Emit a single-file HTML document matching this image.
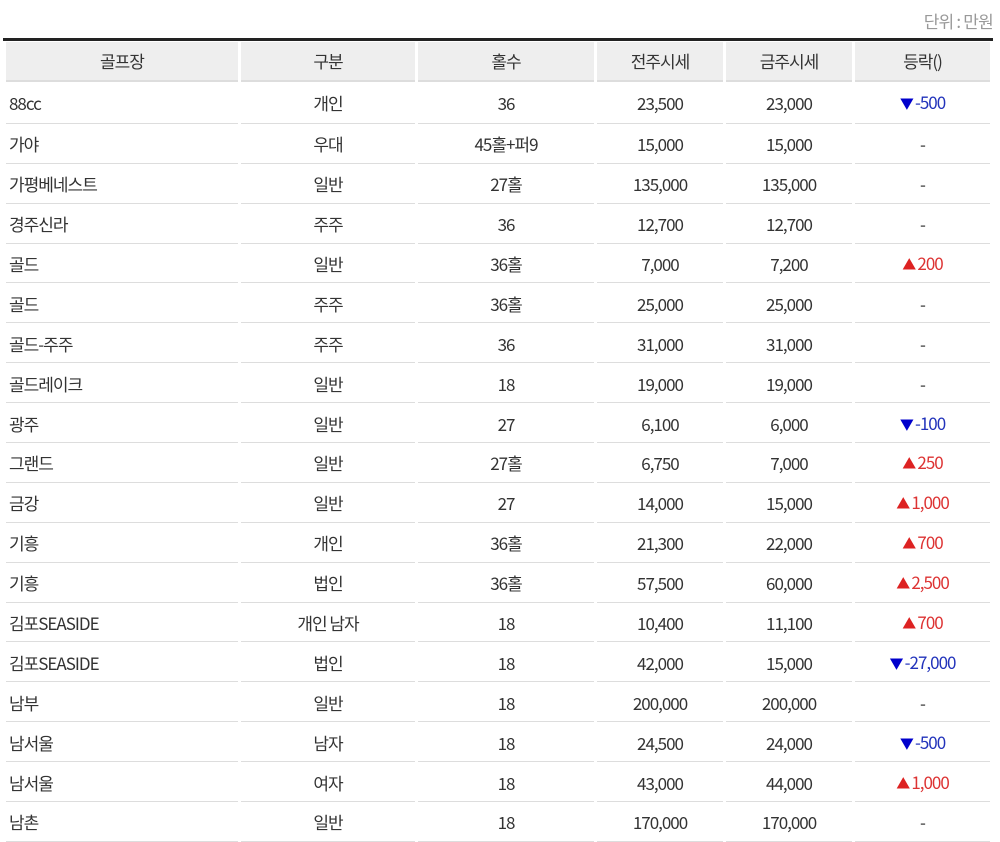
<!DOCTYPE html>
<html><head><meta charset="utf-8"><style>
body{margin:0;background:#fff;font-family:"Noto Sans CJK KR","Liberation Sans",sans-serif;color:#333;width:1000px;height:841px;overflow:hidden;position:relative}
.unit{position:absolute;right:7px;top:10px;font-size:17px;line-height:22px;color:#999;letter-spacing:-0.8px}
.bar{position:absolute;left:3px;top:38px;width:990px;height:3px;background:#222}
table{position:absolute;left:3px;top:42px;border-collapse:separate;border-spacing:3px 0;font-size:17px;letter-spacing:-1px;line-height:20px}
th{background:#eee;font-weight:normal;height:38px;border-bottom:2px solid #ddd;padding:0;vertical-align:middle}
td{height:36.9px;border-bottom:1px solid #ddd;text-align:center;padding:2px 0 0;vertical-align:middle}
td:first-child{text-align:left;padding-left:3px}
.dn{color:#2233bb}.up{color:#dd3333}
.dn::before{content:"▼ ";color:#0000cc;font-size:14px}
.up::before{content:"▲ ";color:#dd2222;font-size:14px}
</style></head><body>
<div class="unit">단위 : 만원</div>
<div class="bar"></div>
<table>
<colgroup><col style="width:232px"><col style="width:174px"><col style="width:176px"><col style="width:126px"><col style="width:126px"><col style="width:135px"></colgroup>
<tr><th>골프장</th><th>구분</th><th>홀수</th><th>전주시세</th><th>금주시세</th><th>등락()</th></tr>
<tr><td style="height:38.9px">88cc</td><td>개인</td><td>36</td><td>23,500</td><td>23,000</td><td><span class="dn">-500</span></td></tr>
<tr><td>가야</td><td>우대</td><td>45홀+퍼9</td><td>15,000</td><td>15,000</td><td>-</td></tr>
<tr><td>가평베네스트</td><td>일반</td><td>27홀</td><td>135,000</td><td>135,000</td><td>-</td></tr>
<tr><td>경주신라</td><td>주주</td><td>36</td><td>12,700</td><td>12,700</td><td>-</td></tr>
<tr><td>골드</td><td>일반</td><td>36홀</td><td>7,000</td><td>7,200</td><td><span class="up">200</span></td></tr>
<tr><td>골드</td><td>주주</td><td>36홀</td><td>25,000</td><td>25,000</td><td>-</td></tr>
<tr><td>골드-주주</td><td>주주</td><td>36</td><td>31,000</td><td>31,000</td><td>-</td></tr>
<tr><td>골드레이크</td><td>일반</td><td>18</td><td>19,000</td><td>19,000</td><td>-</td></tr>
<tr><td>광주</td><td>일반</td><td>27</td><td>6,100</td><td>6,000</td><td><span class="dn">-100</span></td></tr>
<tr><td>그랜드</td><td>일반</td><td>27홀</td><td>6,750</td><td>7,000</td><td><span class="up">250</span></td></tr>
<tr><td>금강</td><td>일반</td><td>27</td><td>14,000</td><td>15,000</td><td><span class="up">1,000</span></td></tr>
<tr><td>기흥</td><td>개인</td><td>36홀</td><td>21,300</td><td>22,000</td><td><span class="up">700</span></td></tr>
<tr><td>기흥</td><td>법인</td><td>36홀</td><td>57,500</td><td>60,000</td><td><span class="up">2,500</span></td></tr>
<tr><td>김포SEASIDE</td><td>개인 남자</td><td>18</td><td>10,400</td><td>11,100</td><td><span class="up">700</span></td></tr>
<tr><td>김포SEASIDE</td><td>법인</td><td>18</td><td>42,000</td><td>15,000</td><td><span class="dn">-27,000</span></td></tr>
<tr><td>남부</td><td>일반</td><td>18</td><td>200,000</td><td>200,000</td><td>-</td></tr>
<tr><td>남서울</td><td>남자</td><td>18</td><td>24,500</td><td>24,000</td><td><span class="dn">-500</span></td></tr>
<tr><td>남서울</td><td>여자</td><td>18</td><td>43,000</td><td>44,000</td><td><span class="up">1,000</span></td></tr>
<tr><td>남촌</td><td>일반</td><td>18</td><td>170,000</td><td>170,000</td><td>-</td></tr>
</table>
</body></html>
